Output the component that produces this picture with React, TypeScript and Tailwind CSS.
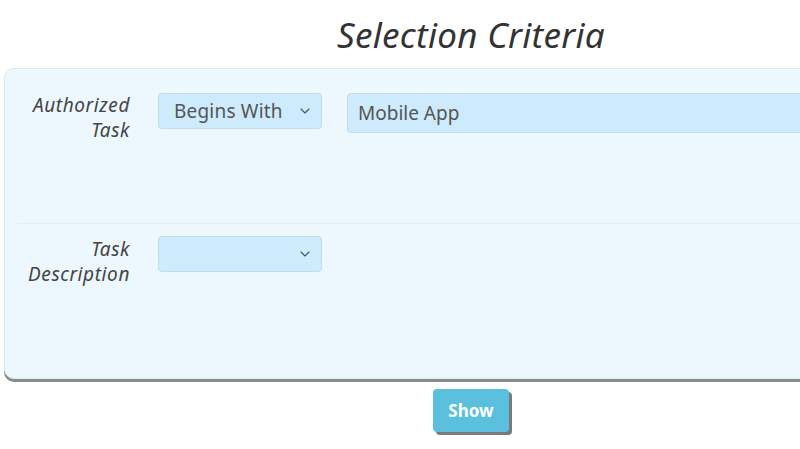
import { ChevronDown } from 'lucide-react';

const font = { fontFamily: '"Noto Sans", Roboto, sans-serif' };

function Select({ value }: { value: string }) {
  return (
    <div className="flex h-[36px] w-[164px] items-center justify-between rounded-[4px] border border-[#c4dbe8] bg-[#cdebfc] pl-[15px] pr-[8px] text-[19px] tracking-[0.2px] text-[#555]">
      <span className="pt-[1px]">{value}</span>
      <ChevronDown className="h-[16px] w-[16px] text-[#555]" strokeWidth={1.75} />
    </div>
  );
}

function Label({ first, second }: { first: string; second: string }) {
  return (
    <div className="mt-[2px] w-[125px] shrink-0 text-right text-[19px] italic leading-[25px] tracking-[0.6px] text-[#444]">
      <div>{first}</div>
      <div>{second}</div>
    </div>
  );
}

export default function App() {
  return (
    <div className="h-[449px] w-[800px] overflow-hidden bg-white" style={font}>
      <div className="w-[938px] pl-[4px]">
        <h1 className="flex h-[68px] items-center justify-center pt-[2px] text-[35px] italic tracking-[0.3px] text-[#333]">
          Selection Criteria
        </h1>
        <div className="h-[311px] rounded-[10px] border border-[#dde8ef] bg-[#edf7fe] shadow-[0_3px_0_#8a8a8a]">
          <div className="flex h-[154px] items-start pt-[22px]">
            <Label first="Authorized" second="Task" />
            <div className="ml-[28px] mt-[2px]">
              <Select value="Begins With" />
            </div>
            <div className="ml-[25px] mt-[2px] flex h-[40px] flex-1 items-center rounded-[4px] border border-[#c4dbe8] bg-[#cdebfc] px-[10px] text-[19px] text-[#555]">
              Mobile App
            </div>
          </div>
          <div className="ml-[12px] border-t border-[#e1edf5]" />
          <div className="flex items-start pt-[11px]">
            <Label first="Task" second="Description" />
            <div className="ml-[28px] mt-[1px]">
              <Select value="" />
            </div>
          </div>
        </div>
        <div className="flex justify-center pt-[10px]">
          <button className="h-[43px] w-[76px] rounded-[4px] bg-[#5bc0de] text-[17px] font-bold text-white shadow-[3px_3px_0_#7a7a7a]">
            Show
          </button>
        </div>
      </div>
    </div>
  );
}
